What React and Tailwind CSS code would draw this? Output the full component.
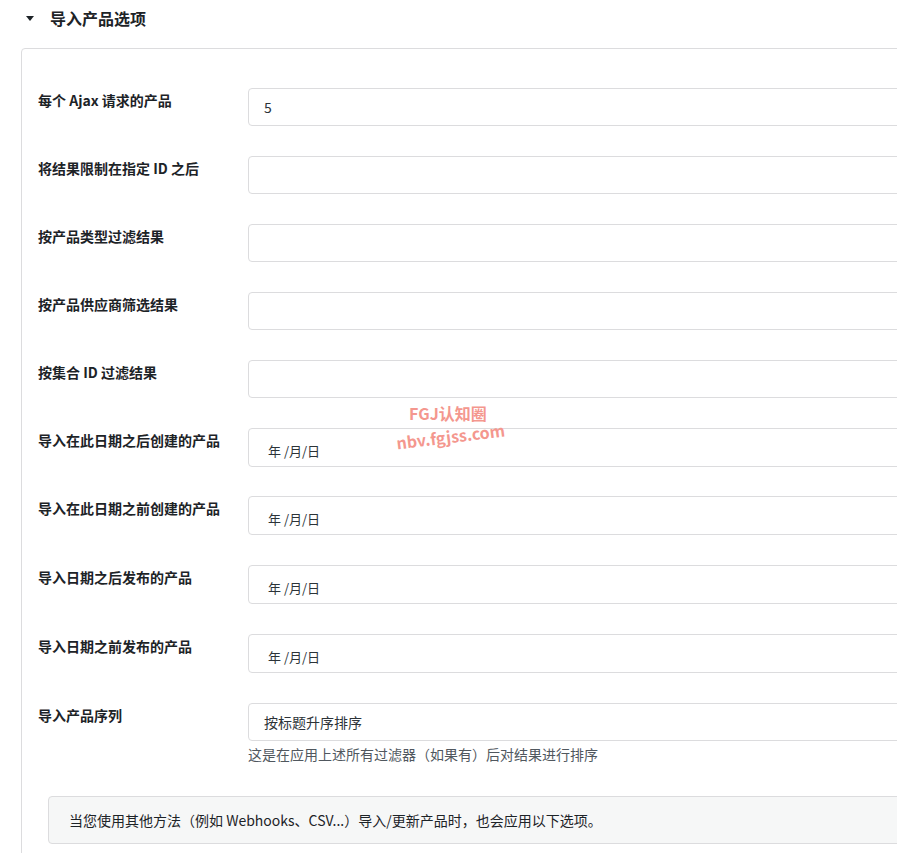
import React from "react";

const rows = [
  { label: "每个 Ajax 请求的产品", value: "5" },
  { label: "将结果限制在指定 ID 之后", value: "" },
  { label: "按产品类型过滤结果", value: "" },
  { label: "按产品供应商筛选结果", value: "" },
  { label: "按集合 ID 过滤结果", value: "" },
  { label: "导入在此日期之后创建的产品", date: true, tight: true },
  { label: "导入在此日期之前创建的产品", date: true },
  { label: "导入日期之后发布的产品", date: true },
  { label: "导入日期之前发布的产品", date: true },
];

const font = { fontFamily: '"Noto Sans CJK SC", "Noto Sans", sans-serif' };

const Field = ({ value, date }) => (
  <div
    className={`${date ? "h-[39px]" : "h-[38px]"} w-[700px] border border-[#dcdcde] rounded-[4px] bg-white flex items-center text-[14px] text-[#2c3338]`}
  >
    {date ? (
      <span className="pl-[19px] pt-[6px] text-[13px]">年 /月/日</span>
    ) : (
      <span className="pl-[15px]">{value}</span>
    )}
  </div>
);

export default function App() {
  return (
    <div className="relative w-[897px] h-[853px] overflow-hidden bg-white" style={font}>
      {/* heading */}
      <div className="flex items-center h-[36px] pl-[26px] gap-[16px]">
        <span className="w-0 h-0 border-l-[4px] border-r-[4px] border-t-[5px] border-l-transparent border-r-transparent border-t-[#1d2327]" />
        <h2 className="text-[16px] font-bold text-[#1d2327]">导入产品选项</h2>
      </div>

      {/* card */}
      <div className="ml-[21px] mt-[12px] w-[1000px] border border-[#dcdcde] rounded-[4px] pl-[16px] pt-[39px] pb-[20px]">
        {rows.map((r) => (
          <div key={r.label} className={`flex ${r.tight ? "mb-[29px]" : "mb-[30px]"}`}>
            <div className="w-[210px] pt-[2px] text-[14px] leading-[20px] font-bold text-[#1d2327]">{r.label}</div>
            <Field value={r.value} date={r.date} />
          </div>
        ))}
        <div className="flex">
          <div className="w-[210px] pt-[2px] text-[14px] leading-[20px] font-bold text-[#1d2327]">导入产品序列</div>
          <div>
            <Field value="按标题升序排序" />
            <p className="mt-[3px] text-[14px] leading-[20px] text-[#50575e]">这是在应用上述所有过滤器（如果有）后对结果进行排序</p>
          </div>
        </div>
        <div className="ml-[10px] mt-[32px] h-[48px] border border-[#dcdcde] rounded-[4px] bg-[#f6f7f7] flex items-center pl-[20px] text-[14px] text-[#1d2327]">
          当您使用其他方法（例如 Webhooks、CSV...）导入/更新产品时，也会应用以下选项。
        </div>
      </div>

      {/* watermark */}
      <div className="absolute left-[409px] top-[401px] text-[16px] font-bold text-[#f4978e]">FGJ认知圈</div>
      <div className="absolute left-[396px] top-[424px] text-[16px] font-bold text-[#f4978e] -rotate-[7deg]">nbv.fgjss.com</div>
    </div>
  );
}
